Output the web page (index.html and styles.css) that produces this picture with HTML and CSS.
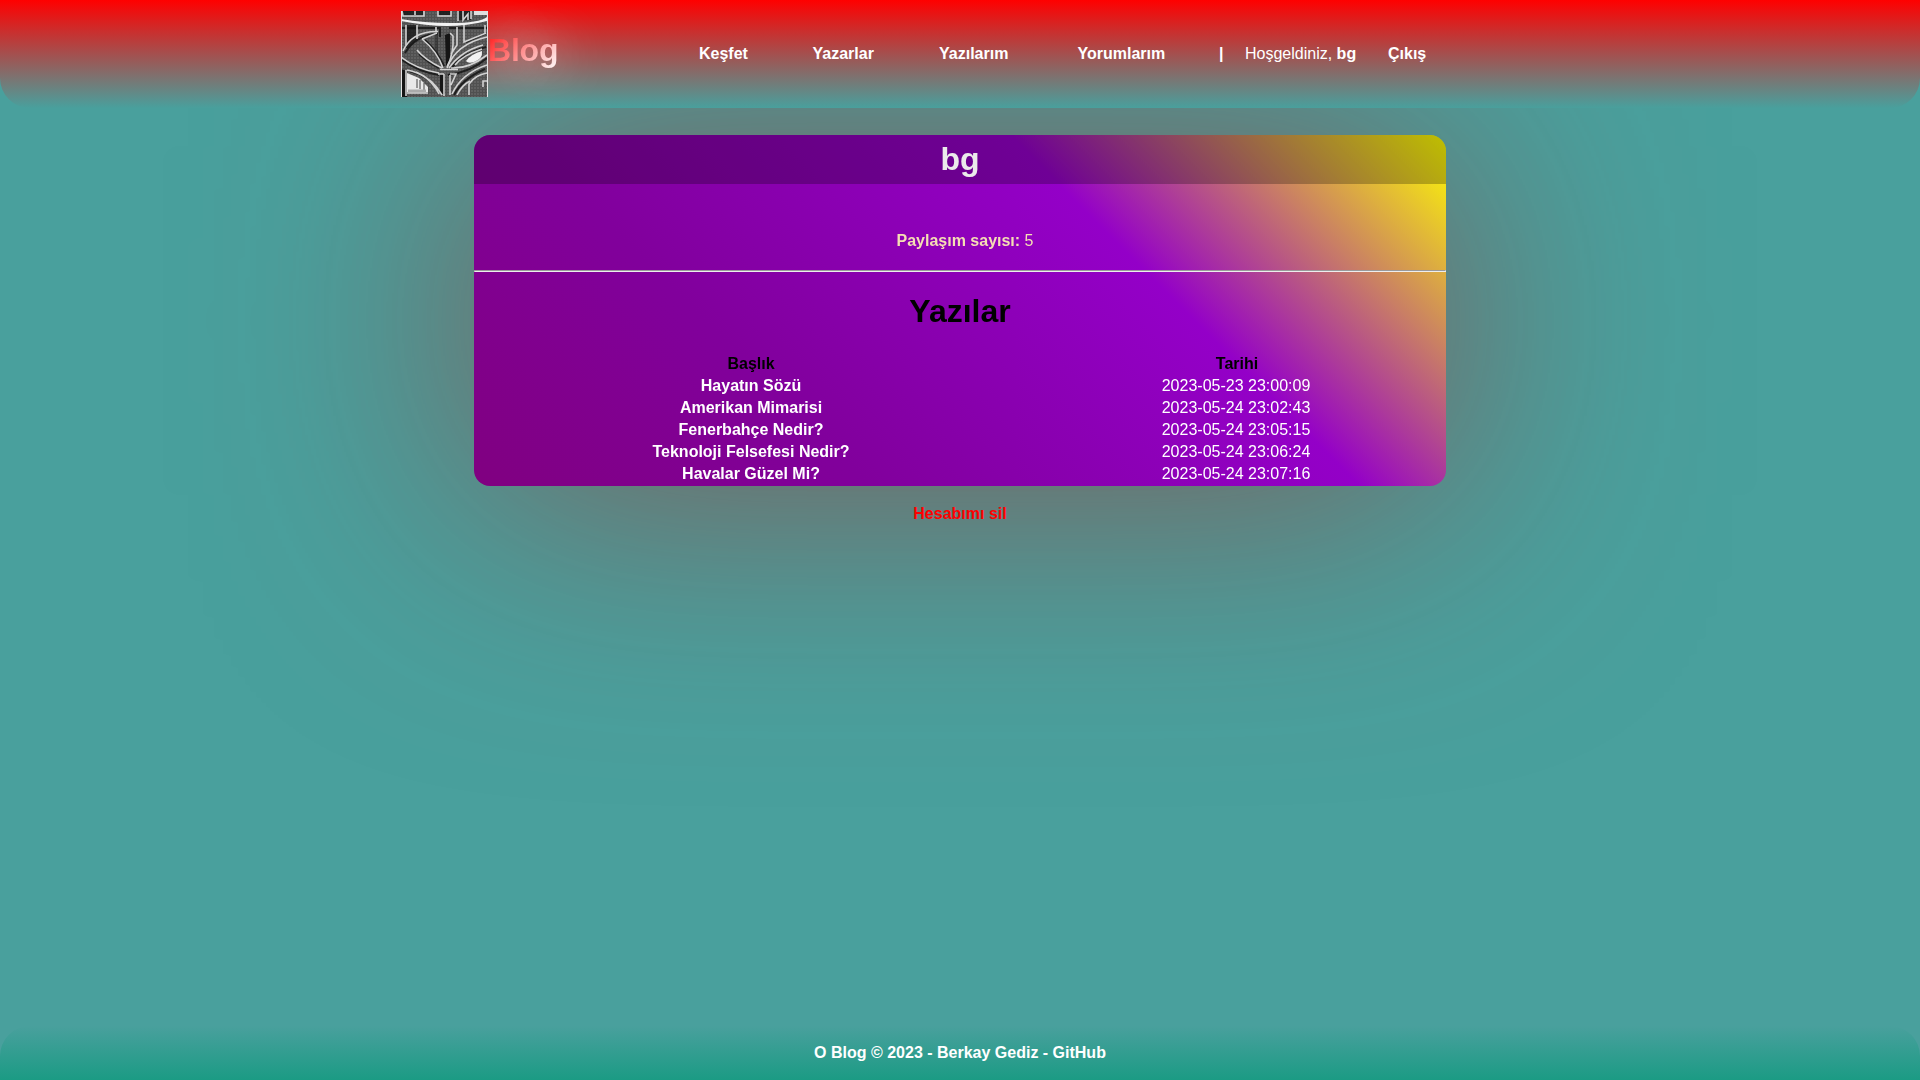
FILE: index.html
```html
<!DOCTYPE html>
<html lang="tr">
<head>
<meta charset="utf-8">
<title>O Blog</title>
<link rel="stylesheet" href="styles.css">
</head>
<body>
<header class="header">
  <div class="header-inner">
    <a class="brand">
      <svg class="logo" viewBox="0 0 87 86" preserveAspectRatio="none">
        <defs>
          <pattern id="weave" width="3" height="3" patternUnits="userSpaceOnUse">
            <rect width="3" height="3" fill="#606060"/>
            <path d="M0 .5H3M.5 0V3" stroke="#505050" stroke-width="1"/>
          </pattern>
        </defs>
        <rect width="87" height="86" fill="url(#weave)"/>
        <g fill="#151515">
          <path d="M5 14h11v15l-9 8H5z" opacity=".75"/>
          <path d="M44 24l5-2v26l-4 8z"/>
          <path d="M34 22h3v22l-3-6z" opacity=".4"/>
          <path d="M0 58l6 2v26H0zM39 63h5v20h-5z"/>
          <path d="M56 0h14v9H56zM2 0h20v5H2zM37 0h13v4H37z" opacity=".8"/>
        </g>
        <path d="M6 62l12 5 9 9v5H6z" fill="#e9e9e9"/>
        <path d="M16 68v9M19 69v9M23 72v7" stroke="#444" stroke-width="1"/>
        <path d="M7 80h18" stroke="#aaa" stroke-width="3"/>
        <path d="M65 50q5-7 16-10 1 8-8 11-6 2-8-1z" fill="#f3f3f3"/>
        <path d="M73 0h13v4H73z" fill="#dedede"/>
        <g fill="none" stroke="#161616" stroke-width="2" opacity=".85">
          <path d="M4 42Q15 24 37 22.500M1 49Q18 61 38 64M24 29Q37 41 43 55M18 43Q28 52 38 57"/>
          <path d="M50 58Q60 43 85 36M47 64Q70 61 86 47M8 60Q29 65 38 81M53 84Q61 68 84 58"/>
          <path d="M0 17h40M48 17h38M39 18v8M65 31l20-9"/>
        </g>
        <g fill="none" stroke="#d2d2d2" stroke-width="1.600">
          <path d="M2 40Q11 20 37 20.500M0 46Q15 58 38 62M21 28Q36 40 42 57M16 39Q24 49 41 57M21 28l15-6"/>
          <path d="M46 57Q55 33 86 26M48 57Q60 40 82 34M50 57Q68 58 86 44M54 54Q62 44 81 38"/>
          <path d="M6 59Q28 63 38 83M15 61Q32 68 41 84M51 83Q61 62 86 54M56 84Q61 74 69 70"/>
          <path d="M39 58.500h18M43 63v22M49 64v20M37 63h6M49 63h6l-5 11M49 22l3 3q1 18-6 31M56 16v18l-6 9M63 14v17l22-9M84 14v9"/>
          <path d="M5 14v20M16 14v14M35 16v5M1 0l1 5h21V0M14 0v4M37 0v5h13V0M57 0v10M62 0v9l5-6v6M70 0v8M68 84V73q6-9 18-11M82 76v-6h4"/>
          <path d="M6 82h21M5 59v26"/>
        </g>
        <path d="M0 8Q22 12 50 12T86 6v4Q66 15 46 15T0 10z" fill="#f2f2f2"/>
        <path d="M.5 0V86M86.500 0V86" stroke="#e4e4e4" stroke-width="1"/>
      </svg>
      <span class="brand-name">Blog</span>
    </a>
    <nav class="nav">
      <a class="nav-item w1">Keşfet</a>
      <a class="nav-item w2">Yazarlar</a>
      <a class="nav-item w3">Yazılarım</a>
      <a class="nav-item w4">Yorumlarım</a>
      <span class="divider">|</span>
      <span class="welcome">Hoşgeldiniz, <b>bg</b></span>
      <a class="logout">Çıkış</a>
    </nav>
  </div>
</header>
<main class="main">
  <section class="card">
    <h1 class="card-title">bg</h1>
    <p class="count"><b>Paylaşım sayısı:</b> 5</p>
    <hr class="rule">
    <h1 class="posts-title">Yazılar</h1>
    <table class="posts">
      <tr><th>Başlık</th><th>Tarihi</th></tr>
      <tr><td><a>Hayatın Sözü</a></td><td>2023-05-23 23:00:09</td></tr>
      <tr><td><a>Amerikan Mimarisi</a></td><td>2023-05-24 23:02:43</td></tr>
      <tr><td><a>Fenerbahçe Nedir?</a></td><td>2023-05-24 23:05:15</td></tr>
      <tr><td><a>Teknoloji Felsefesi Nedir?</a></td><td>2023-05-24 23:06:24</td></tr>
      <tr><td><a>Havalar Güzel Mi?</a></td><td>2023-05-24 23:07:16</td></tr>
    </table>
  </section>
  <a class="delete">Hesabımı sil</a>
</main>
<footer class="footer">O Blog © 2023 - Berkay Gediz - GitHub</footer>
</body>
</html>
```
FILE: styles.css
```css
* { box-sizing: border-box; }
body {
  margin: 0;
  height: 1080px;
  overflow: hidden;
  display: flex;
  flex-direction: column;
  background: #49a09d;
  font: 16px/18px "Liberation Sans", Arial, sans-serif;
  color: #fff;
}
.header {
  position: relative;
  z-index: 1;
  height: 108px;
  flex: none;
  background: linear-gradient(red, #49a09d);
  border-radius: 0 0 30px 30px;
}
.header-inner {
  display: flex;
  width: 1118px;
  margin: 0 auto;
  height: 108px;
}
.brand { display: flex; padding-top: 11px; width: 298px; }
.logo { width: 87px; height: 86px; display: block; position: relative; z-index: 1; }
.brand-name {
  align-self: flex-start;
  margin: 21px 0 0;
  font-size: 32px;
  line-height: 37px;
  font-weight: bold;
  letter-spacing: -.2px;
  color: transparent;
  background: linear-gradient(135deg, red, #fff);
  background-clip: text;
  -webkit-background-clip: text;
  text-shadow: 0 0 50px #fff;
}
.nav { display: flex; align-items: center; white-space: nowrap; }
.nav-item, .logout, .divider { font-weight: bold; }
.w1 { width: 113.500px; }
.w2 { width: 126.500px; }
.w3 { width: 138.500px; }
.w4 { width: 141.500px; }
.divider { width: 26px; }
.welcome { width: 143px; }
.main { flex: 1; display: flex; flex-direction: column; align-items: center; padding-top: 27px; }
.card {
  width: 972px;
  height: 351px;
  border-radius: 16px;
  background: linear-gradient(45deg, purple, #81009c 30%, #9400c8 67%, yellow);
  filter: drop-shadow(0 10px 130px rgba(165, 42, 42, .58));
  text-align: center;
}
.card-title {
  margin: 0;
  height: 49px;
  font-size: 32px;
  line-height: 49px;
  color: #ebebeb;
  background: rgba(0, 0, 0, .25);
  border-radius: 16px 16px 0 0;
}
.count { margin: 48px 0 20px; padding-left: 10px; color: wheat; }
.rule { margin: 0; }
.posts-title { margin: 21px 0 24px; font-size: 32px; line-height: 36px; color: #000; }
.posts { width: 100%; border-collapse: collapse; }
.posts tr { height: 22px; }
.posts th, .posts td { padding: 2px 1px; }
.posts td + td { padding-right: 3px; }
.posts th { color: #000; }
.posts a { font-weight: bold; }
.posts th:first-child { width: 57%; }
.delete { position: relative; margin-top: 19px; color: red; font-weight: bold; }
.footer {
  height: 54px;
  flex: none;
  padding-top: 18px;
  text-align: center;
  font-weight: bold;
  border-radius: 30px 30px 0 0;
  background: linear-gradient(#49a09d, #1b9b84);
}
```
